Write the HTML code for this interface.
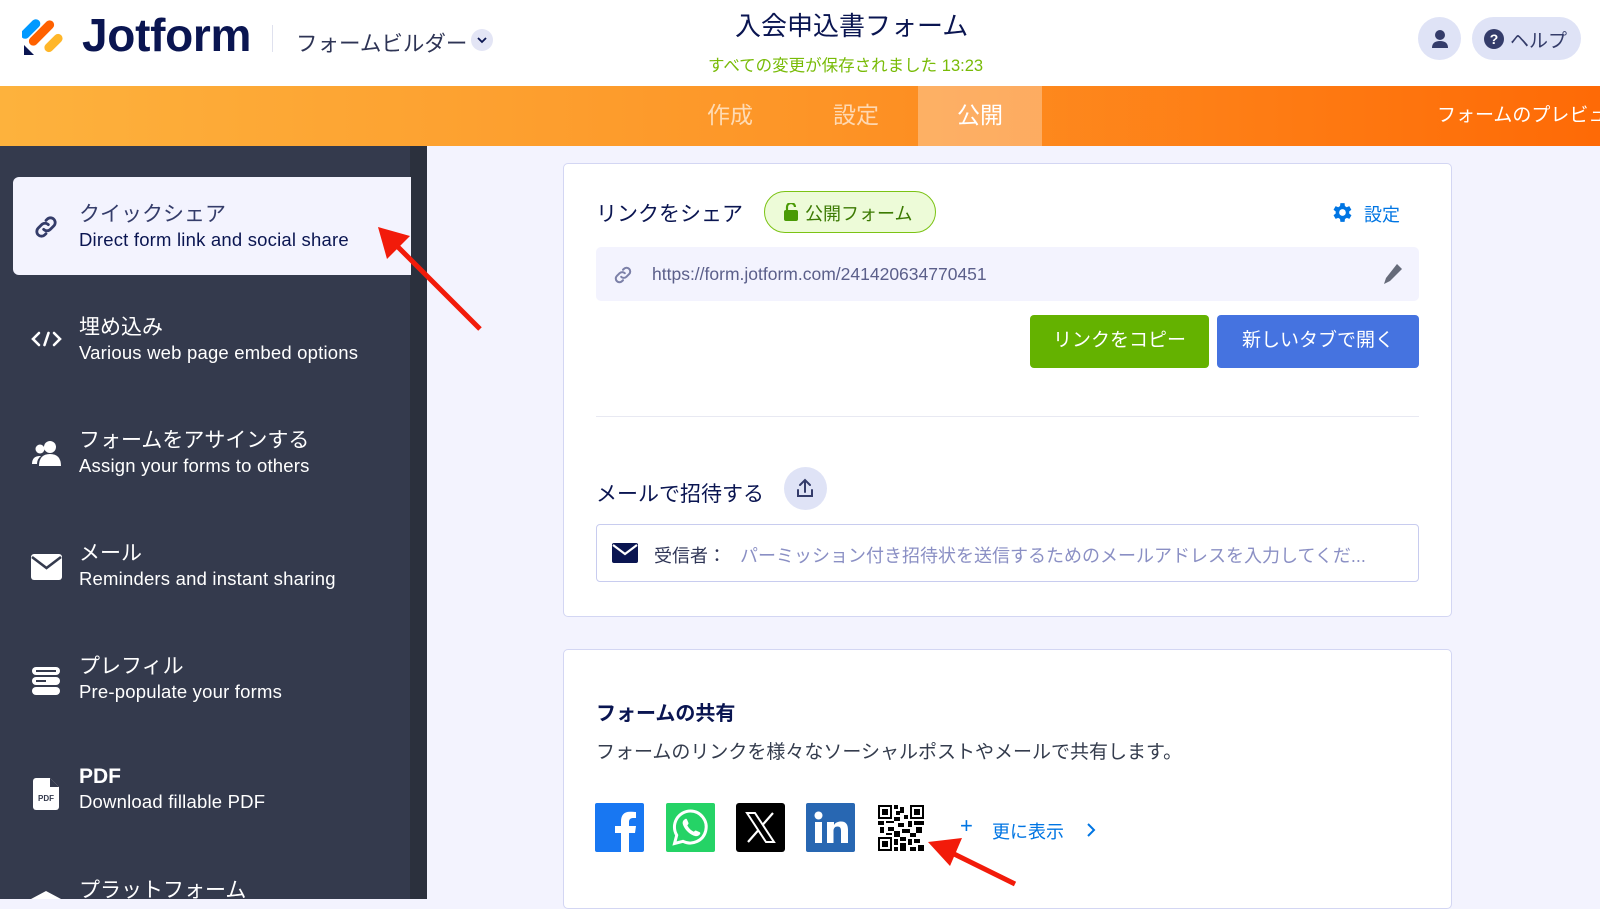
<!DOCTYPE html>
<html><head><meta charset="utf-8"><style>
*{margin:0;padding:0;box-sizing:border-box}
body{width:1600px;height:899px;overflow:hidden;background:#f3f3fe;font-family:"Liberation Sans","Noto Sans CJK JP",sans-serif;position:relative}
.a{position:absolute;white-space:nowrap}
.hdr{left:0;top:0;width:1600px;height:86px;background:#fff}
.bar{left:0;top:86px;width:1600px;height:60px;background:linear-gradient(90deg,#fdb23d,#fd9527 50%,#fe6a06)}
.tab{top:86px;height:60px;line-height:58px;font-size:23px;color:rgba(255,255,255,.65)}
.side{left:0;top:146px;width:410px;height:753px;background:#343a4d}
.scr{left:410px;top:146px;width:17px;height:753px;background:#2b303d}
.it .t{font-size:21px;color:#fff}
.it .s{font-size:18.5px;color:#fff;letter-spacing:0.2px}
.card{background:#fff;border:1px solid #d3d6f3;border-radius:5px}
</style></head><body>
<div class="a hdr"></div>
<!-- logo -->
<svg class="a" style="left:22px;top:13px" width="42" height="44" viewBox="0 0 42 44">
<rect x="4" y="4" width="9" height="24" rx="4.5" fill="#0099ff" transform="rotate(45 8.5 16)"/>
<rect x="15" y="4" width="9" height="32" rx="4.5" fill="#ff6100" transform="rotate(45 19.5 20)"/>
<rect x="27" y="19" width="9" height="22" rx="4.5" fill="#ffb629" transform="rotate(45 31.5 30)"/>
<path d="M2 32 L2 42 L12 42 Z" fill="#0a1551"/>
</svg>
<div class="a" style="left:82px;top:8px;font-size:46px;font-weight:bold;color:#0a1551;letter-spacing:-0.3px">Jotform</div>
<div class="a" style="left:272px;top:25px;width:1px;height:27px;background:#dfe1ee"></div>
<div class="a" style="left:296px;top:27px;font-size:21.5px;color:#2e3455">フォームビルダー</div>
<div class="a" style="left:471px;top:29px;width:22px;height:22px;border-radius:11px;background:#e3e5f5"></div>
<svg class="a" style="left:476px;top:36px" width="12" height="8" viewBox="0 0 12 8"><path d="M2 2 L6 6 L10 2" stroke="#0a1551" stroke-width="1.8" fill="none"/></svg>
<div class="a" style="left:735px;top:6px;font-size:26px;color:#0a1551">入会申込書フォーム</div>
<div class="a" style="left:708px;top:52px;font-size:16.5px;color:#78bb07">すべての変更が保存されました 13:23</div>
<div class="a" style="left:1418px;top:17px;width:43px;height:43px;border-radius:22px;background:#dfe3f6"></div>
<svg class="a" style="left:1429px;top:28px" width="22" height="22" viewBox="0 0 22 22"><circle cx="11" cy="7" r="5" fill="#343c6a"/><path d="M3 20 Q3 13 11 13 Q19 13 19 20 Z" fill="#343c6a"/></svg>
<div class="a" style="left:1472px;top:17px;width:109px;height:43px;border-radius:22px;background:#dfe3f6"></div>
<div class="a" style="left:1484px;top:29px;width:20px;height:20px;border-radius:10px;background:#343c6a;color:#fff;font-size:14px;font-weight:bold;text-align:center;line-height:20px">?</div>
<div class="a" style="left:1510px;top:26px;font-size:19px;color:#343c6a">ヘルプ</div>

<div class="a bar"></div>
<div class="a" style="left:918px;top:86px;width:124px;height:60px;background:rgba(255,255,255,.3)"></div>
<div class="a tab" style="left:707px">作成</div>
<div class="a tab" style="left:833px">設定</div>
<div class="a tab" style="left:957px;color:#fff">公開</div>
<div class="a" style="left:1437px;top:86px;line-height:60px;font-size:19px;color:#fff">フォームのプレビュー</div>

<div class="a side"></div>
<div class="a scr"></div>
<div class="a" style="left:13px;top:177px;width:398px;height:98px;background:#f3f3fe;border-radius:6px 0 0 6px"></div>
<svg class="a" style="left:32px;top:213px" width="28" height="28" viewBox="0 0 24 24" fill="none" stroke="#343c6a" stroke-width="2.4" stroke-linecap="round"><path d="M10 14a4 4 0 0 0 5.7 0l3-3a4 4 0 0 0-5.7-5.7l-1 1"/><path d="M14 10a4 4 0 0 0-5.7 0l-3 3a4 4 0 0 0 5.7 5.7l1-1"/></svg>
<div class="a it" style="left:79px;top:198px"><div class="t" style="color:#343c6a">クイックシェア</div><div class="s" style="color:#0a1551;margin-top:1px">Direct form link and social share</div></div>

<svg class="a" style="left:31px;top:331px" width="31" height="16" viewBox="0 0 31 16" fill="none" stroke="#fff" stroke-width="2.6" stroke-linecap="round"><path d="M8 2 L2 8 L8 14 M23 2 L29 8 L23 14 M17.5 2 L13.5 14"/></svg>
<div class="a it" style="left:79px;top:311px"><div class="t">埋め込み</div><div class="s" style="margin-top:1px">Various web page embed options</div></div>

<svg class="a" style="left:31px;top:440px" width="32" height="26" viewBox="0 0 32 26" fill="#fff"><circle cx="19" cy="7" r="6"/><path d="M8 26 Q8 14 19 14 Q30 14 30 26Z"/><circle cx="9" cy="9" r="4.5"/><path d="M1 24 Q1 16 9 16 L10 16 Q6 19 6 24Z"/></svg>
<div class="a it" style="left:79px;top:424px"><div class="t">フォームをアサインする</div><div class="s" style="margin-top:1px">Assign your forms to others</div></div>

<svg class="a" style="left:31px;top:554px" width="31" height="26" viewBox="0 0 31 26"><rect width="31" height="26" rx="3" fill="#fff"/><path d="M1 3 L15.5 14 L30 3" stroke="#343a4d" stroke-width="2.6" fill="none"/></svg>
<div class="a it" style="left:79px;top:537px"><div class="t">メール</div><div class="s" style="margin-top:1px">Reminders and instant sharing</div></div>

<svg class="a" style="left:32px;top:667px" width="28" height="28" viewBox="0 0 28 28" fill="#fff"><rect y="0" width="28" height="8" rx="4"/><rect y="10" width="28" height="8" rx="4"/><rect y="20" width="28" height="8" rx="4"/><rect x="4" y="3" width="20" height="2" fill="#343a4d"/><rect x="4" y="13" width="10" height="2" fill="#343a4d"/></svg>
<div class="a it" style="left:79px;top:650px"><div class="t">プレフィル</div><div class="s" style="margin-top:1px">Pre-populate your forms</div></div>

<svg class="a" style="left:33px;top:778px" width="26" height="32" viewBox="0 0 26 32"><path d="M3 0 H17 L26 9 V29 a3 3 0 0 1-3 3 H3 a3 3 0 0 1-3-3 V3 a3 3 0 0 1 3-3Z" fill="#fff"/><path d="M17 0 V9 H26" fill="#343a4d"/><text x="13" y="23" font-size="8" font-weight="bold" text-anchor="middle" fill="#343a4d" font-family="Liberation Sans">PDF</text></svg>
<div class="a it" style="left:79px;top:765px"><div class="t" style="font-weight:bold">PDF</div><div class="s" style="margin-top:2px">Download fillable PDF</div></div>

<svg class="a" style="left:31px;top:889px" width="30" height="10" viewBox="0 0 30 10"><path d="M0 10 L15 2 L30 10Z" fill="#fff"/></svg>
<div class="a it" style="left:79px;top:874px"><div class="t">プラットフォーム</div></div>

<!-- arrow 1 -->
<svg class="a" style="left:370px;top:220px" width="120" height="120" viewBox="370 220 120 120"><line x1="480" y1="329" x2="395" y2="244" stroke="#f21b0a" stroke-width="5"/><path d="M378 227 L410 236 L387 259Z" fill="#f21b0a"/></svg>

<!-- card 1 -->
<div class="a card" style="left:563px;top:163px;width:889px;height:454px"></div>
<div class="a" style="left:596px;top:198px;font-size:21px;color:#0a1551">リンクをシェア</div>
<div class="a" style="left:764px;top:191px;width:172px;height:42px;border:1.5px solid #7bc314;border-radius:21px;background:#edfbd8"></div>
<svg class="a" style="left:784px;top:203px" width="14" height="18" viewBox="0 0 14 18"><rect y="7" width="14" height="11" rx="2" fill="#4a9a05"/><path d="M3 7 V4 a4 4 0 0 1 8 0" stroke="#4a9a05" stroke-width="2.2" fill="none"/></svg>
<div class="a" style="left:805px;top:200px;font-size:18px;color:#3c7a02">公開フォーム</div>
<svg class="a" style="left:1330px;top:200px" width="25" height="25" viewBox="0 0 24 24"><path fill="#0075e3" d="M19.4 13a7.5 7.5 0 0 0 0-2l2.1-1.6-2-3.5-2.5 1a7.4 7.4 0 0 0-1.7-1L15 3h-4l-.4 2.9a7.4 7.4 0 0 0-1.7 1l-2.5-1-2 3.5L6.5 11a7.5 7.5 0 0 0 0 2l-2.1 1.6 2 3.5 2.5-1a7.4 7.4 0 0 0 1.7 1L11 21h4l.4-2.9a7.4 7.4 0 0 0 1.7-1l2.5 1 2-3.5Z" transform="translate(-1 0)"/><circle cx="12" cy="12" r="3.2" fill="#fff"/></svg>
<div class="a" style="left:1364px;top:201px;font-size:18px;color:#0075e3">設定</div>
<div class="a" style="left:596px;top:247px;width:823px;height:54px;background:#f3f3fe;border-radius:5px"></div>
<svg class="a" style="left:612px;top:264px" width="22" height="22" viewBox="0 0 24 24" fill="none" stroke="#7c80a8" stroke-width="2.2" stroke-linecap="round"><path d="M10 14a4 4 0 0 0 5.7 0l3-3a4 4 0 0 0-5.7-5.7l-1 1"/><path d="M14 10a4 4 0 0 0-5.7 0l-3 3a4 4 0 0 0 5.7 5.7l1-1"/></svg>
<div class="a" style="left:652px;top:264px;font-size:17.5px;color:#5b5f8a">https://form.jotform.com/241420634770451</div>
<svg class="a" style="left:1383px;top:263px" width="20" height="22" viewBox="0 0 20 22"><path d="M14 1 L19 6 L7 18 L1 21 L3 15Z" fill="#666b7a"/></svg>
<div class="a" style="left:1030px;top:315px;width:179px;height:53px;background:#64b200;border-radius:4px;color:#fff;font-size:19px;text-align:center;line-height:52px">リンクをコピー</div>
<div class="a" style="left:1217px;top:315px;width:202px;height:53px;background:#4573e0;border-radius:4px;color:#fff;font-size:19px;text-align:center;line-height:52px">新しいタブで開く</div>
<div class="a" style="left:596px;top:416px;width:823px;height:1px;background:#e8e9f2"></div>
<div class="a" style="left:596px;top:478px;font-size:21px;color:#0a1551">メールで招待する</div>
<div class="a" style="left:784px;top:467px;width:43px;height:43px;border-radius:22px;background:#dfe3f6"></div>
<svg class="a" style="left:795px;top:478px" width="20" height="20" viewBox="0 0 20 20" fill="none" stroke="#343c6a" stroke-width="2" stroke-linecap="round"><path d="M10 14 V2 M5 7 L10 2 L15 7 M3 12 V18 H17 V12"/></svg>
<div class="a" style="left:596px;top:524px;width:823px;height:58px;border:1px solid #c8ccef;border-radius:4px;background:#fff"></div>
<svg class="a" style="left:612px;top:543px" width="26" height="20" viewBox="0 0 26 20"><rect width="26" height="20" rx="2" fill="#0a1551"/><path d="M1 2 L13 11 L25 2" stroke="#fff" stroke-width="2.2" fill="none"/></svg>
<div class="a" style="left:654px;top:542px;font-size:18px;color:#2e3455">受信者：</div>
<div class="a" style="left:740px;top:542px;font-size:18px;color:#8a8fc4">パーミッション付き招待状を送信するためのメールアドレスを入力してくだ...</div>

<!-- card 2 -->
<div class="a card" style="left:563px;top:649px;width:889px;height:260px"></div>
<div class="a" style="left:596px;top:697px;font-size:20px;font-weight:bold;color:#0a1551">フォームの共有</div>
<div class="a" style="left:596px;top:737px;font-size:19px;color:#343c4d">フォームのリンクを様々なソーシャルポストやメールで共有します。</div>
<svg class="a" style="left:595px;top:803px" width="49" height="49" viewBox="0 0 49 49"><rect width="49" height="49" rx="2" fill="#1877f2"/><path d="M34 49 V30 H40 L41 23 H34 V19 c0-2 1-4 4-4 H41 V9 c-1 0-3-0.3-6-0.3 c-6 0-9 3.5-9 9.5 V23 H20 V30 H26 V49Z" fill="#fff"/></svg>
<svg class="a" style="left:666px;top:803px" width="49" height="49" viewBox="0 0 49 49"><rect width="49" height="49" rx="2" fill="#25d366"/><path d="M24.5 8 a16 16 0 0 0-13.8 24.2 L8.5 40.5 L17 38.3 A16 16 0 1 0 24.5 8Z" fill="none" stroke="#fff" stroke-width="3"/><path d="M18.5 16.5 c1-1 2-1 2.5 0 l1.5 3.5 c.3 .8-.5 1.5-1.2 2.3 c1.5 3 3.5 5 6.5 6.5 c.8-.7 1.5-1.5 2.3-1.2 l3.5 1.5 c1 .5 1 1.5 0 2.5 c-2 2-4 2-7 .5 c-4-2-7-5-9-9 c-1.5-3-1.2-5 .9-6.6Z" fill="#fff"/></svg>
<svg class="a" style="left:736px;top:803px" width="49" height="49" viewBox="0 0 49 49"><rect width="49" height="49" rx="3" fill="#000"/><path d="M11 10 H19 L38 39 H30Z" fill="none" stroke="#fff" stroke-width="2"/><path d="M37 10 L26.5 22 M22.5 27 L12 39" stroke="#fff" stroke-width="2.2"/></svg>
<svg class="a" style="left:806px;top:803px" width="49" height="49" viewBox="0 0 49 49"><rect width="49" height="49" rx="2" fill="#2867b2"/><rect x="9" y="19" width="7" height="21" fill="#fff"/><circle cx="12.5" cy="12.5" r="4" fill="#fff"/><path d="M21 19 H28 V22 c1.5-2.5 4-3.5 7-3.5 c5 0 7 3 7 8.5 V40 H35 V28 c0-3-1-4.5-3.5-4.5 c-2.5 0-4 1.7-4 4.5 V40 H21Z" fill="#fff"/></svg>
<svg class="a" style="left:878px;top:805px" width="46" height="46" viewBox="0 0 23 23" shape-rendering="crispEdges"><rect width="23" height="23" fill="#fff"/><g fill="#000"><path d="M0 0h7v7H0z M16 0h7v7h-7z M0 16h7v7H0z"/></g><g fill="#fff"><path d="M1 1h5v5H1z M17 1h5v5h-5z M1 17h5v5H1z"/></g><g fill="#000"><path d="M2 2h3v3H2z M18 2h3v3h-3z M2 18h3v3H2z M8 0h2v2H8z M11 1h2v3h-2z M9 3h2v2H9z M13 5h2v2h-2z M8 6h3v2H8z M0 8h3v2H0z M4 8h4v1H4z M10 9h3v2h-3z M15 8h2v3h-2z M18 8h5v2h-5z M1 11h2v3H1z M5 11h3v2H5z M12 12h4v2h-4z M19 11h3v3h-3z M8 13h3v3H8z M16 14h3v2h-3z M4 14h3v1H4z M8 17h2v3H8z M11 16h3v2h-3z M15 17h2v3h-2z M18 17h3v2h-3z M11 19h3v4h-3z M20 20h3v3h-3z M16 21h3v2h-3z M8 21h2v2H8z"/></g></svg>
<div class="a" style="left:960px;top:815px;font-size:22px;color:#0075e3;line-height:22px">+</div>
<div class="a" style="left:992px;top:818px;font-size:18px;color:#0075e3">更に表示</div>
<svg class="a" style="left:1085px;top:821px" width="12" height="18" viewBox="0 0 12 18"><path d="M3 3 L9 9 L3 15" stroke="#0075e3" stroke-width="2" fill="none"/></svg>

<!-- arrow 2 -->
<svg class="a" style="left:920px;top:830px" width="110" height="69" viewBox="920 830 110 69"><line x1="1015" y1="884" x2="948" y2="851" stroke="#f21b0a" stroke-width="5"/><path d="M928 842 L962 838 L950 866Z" fill="#f21b0a"/></svg>
</body></html>
